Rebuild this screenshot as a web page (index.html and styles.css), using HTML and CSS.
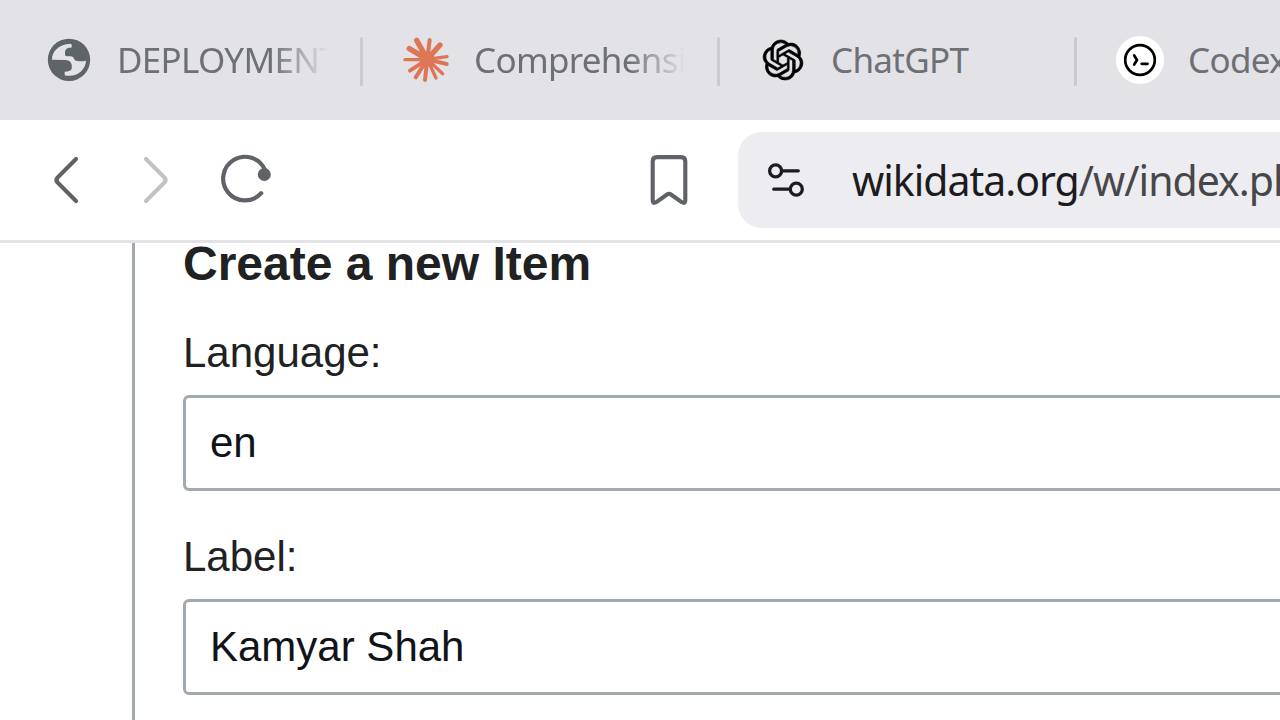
FILE: index.html
```html
<!DOCTYPE html>
<html lang="en">
<head>
<meta charset="utf-8">
<title>Create a new Item</title>
<link rel="stylesheet" href="styles.css">
</head>
<body>
<div class="tabs">
  <div class="tab">
    <svg class="favicon" viewBox="0 0 144 144"><circle cx="72" cy="71.500" r="63.500" fill="#5f6469"/><path d="M21 71C20 50 36 25 78 23Q83 28 79 35H70Q61 38 60 47V56Q61 61 68 61H78Q86 62 87 68Q89 75 97 75Q109 77 123 74C122 102 94 126 59 118V107Q78 106 80 98C82 84 77 72 61 72Z" fill="#e3e2e7"/></svg>
    <span class="tab-title fade">DEPLOYMENT</span>
  </div>
  <div class="tab">
    <svg class="favicon" viewBox="0 0 144 144"><g stroke="#de7655" stroke-linecap="round" fill="none"><path stroke-width="16" d="M76 70L44 13M76 70L114 27M76 70L22 38"/><path stroke-width="12" d="M76 70L83 12M76 70L24 104M76 70L41 124M76 70L69 132M76 70L134 84"/><path stroke-width="10" d="M76 70L9 71M76 70L135 62M76 70L122 113M76 70L102 126"/></g><circle cx="76" cy="70" r="22" fill="#de7655"/></svg>
    <span class="tab-title fade">Comprehensive</span>
  </div>
  <div class="tab">
    <svg class="favicon" viewBox="0 0 28.800 28.800"><path transform="translate(2.400 2.400)" fill="#000" stroke="#000" stroke-width=".4" d="M22.2819 9.8211a5.9847 5.9847 0 0 0-.5157-4.9108 6.0462 6.0462 0 0 0-6.5098-2.9A6.0651 6.0651 0 0 0 4.9807 4.1818a5.9847 5.9847 0 0 0-3.9977 2.9 6.0462 6.0462 0 0 0 .7427 7.0966 5.98 5.98 0 0 0 .511 4.9107 6.051 6.051 0 0 0 6.5146 2.9001A5.9847 5.9847 0 0 0 13.2599 24a6.0557 6.0557 0 0 0 5.7718-4.2058 5.9894 5.9894 0 0 0 3.9977-2.9001 6.0557 6.0557 0 0 0-.7475-7.0729zm-9.022 12.6081a4.4755 4.4755 0 0 1-2.8764-1.0408l.1419-.0804 4.7783-2.7582a.7948.7948 0 0 0 .3927-.6813v-6.7369l2.02 1.1686a.071.071 0 0 1 .038.052v5.5826a4.504 4.504 0 0 1-4.4945 4.4944zm-9.6607-4.1254a4.4708 4.4708 0 0 1-.5346-3.0137l.142.0852 4.783 2.7582a.7712.7712 0 0 0 .7806 0l5.8428-3.3685v2.3324a.0804.0804 0 0 1-.0332.0615L9.74 19.9502a4.4992 4.4992 0 0 1-6.1408-1.6464zM2.3408 7.8956a4.485 4.485 0 0 1 2.3655-1.9728V11.6a.7664.7664 0 0 0 .3879.6765l5.8144 3.3543-2.0201 1.1685a.0757.0757 0 0 1-.071 0l-4.8303-2.7865A4.504 4.504 0 0 1 2.3408 7.872zm16.5963 3.8558L13.1038 8.364 15.1192 7.2a.0757.0757 0 0 1 .071 0l4.8303 2.7913a4.4944 4.4944 0 0 1-.6765 8.1042v-5.6772a.79.79 0 0 0-.407-.667zm2.0107-3.0231l-.142-.0852-4.7735-2.7818a.7759.7759 0 0 0-.7854 0L9.409 9.2297V6.8974a.0662.0662 0 0 1 .0284-.0615l4.8303-2.7866a4.4992 4.4992 0 0 1 6.6802 4.66zM8.3065 12.863l-2.02-1.1638a.0804.0804 0 0 1-.038-.0567V6.0742a4.4992 4.4992 0 0 1 7.3757-3.4537l-.142.0805L8.704 5.459a.7948.7948 0 0 0-.3927.6813zm1.0976-2.3654l2.602-1.4998 2.6069 1.4998v2.9994l-2.5974 1.4997-2.6067-1.4997Z"/></svg>
    <span class="tab-title">ChatGPT</span>
  </div>
  <div class="tab">
    <svg class="favicon" viewBox="0 0 48 48"><circle cx="24" cy="24" r="24" fill="#fff"/><g fill="none" stroke="#000" stroke-width="2.700" stroke-linecap="round" stroke-linejoin="round"><circle cx="24" cy="24" r="14.800"/><path d="M18.200 19.500L21 24L18.200 28.500M25.700 27.800H31.500"/></g></svg>
    <span class="tab-title">Codex</span>
  </div>
</div>
<div class="toolbar">
  <div class="nav">
    <svg class="nav-icon" viewBox="0 0 60 60"><path d="M46 9L27.500 27.600Q25.400 30 27.500 32.400L46 51" fill="none" stroke="#5f6368" stroke-width="4.200" stroke-linecap="round"/></svg>
    <svg class="nav-icon" viewBox="0 0 60 60"><path d="M26 9L44.500 27.600Q46.600 30 44.500 32.400L26 51" fill="none" stroke="#c1c2c4" stroke-width="4.200" stroke-linecap="round"/></svg>
    <svg class="nav-icon" viewBox="0 0 60 60"><path d="M55 20A21.800 21.800 0 1 0 51.200 43.200" fill="none" stroke="#5f6368" stroke-width="4.200" stroke-linecap="round"/><circle cx="54.300" cy="24.500" r="6.500" fill="#5f6368"/></svg>
  </div>
  <svg class="bookmark" viewBox="0 0 48 60"><path d="M9 7.100H33Q37.300 7.100 37.300 11.400V50.500Q37.300 54 34 52.300L23 44.500Q21 43.200 19 44.500L8 52.300Q4.700 54 4.700 50.500V11.400Q4.700 7.100 9 7.100Z" fill="none" stroke="#5f6368" stroke-width="4.100" stroke-linejoin="round"/></svg>
  <div class="address">
    <svg class="site-icon" viewBox="0 0 48 48"><g fill="none" stroke="#1b1b20" stroke-width="3.300" stroke-linecap="round"><circle cx="13.600" cy="14.800" r="6"/><path d="M20 14.800H36.300M11.800 33.200H27.500"/><circle cx="34.300" cy="33.200" r="6"/></g></svg>
    <span class="url"><span class="host">wikidata.org</span>/w/index.php</span>
  </div>
</div>
<main class="page">
  <section class="form">
    <h1>Create a new Item</h1>
    <label>Language:</label>
    <div class="field">en</div>
    <label>Label:</label>
    <div class="field">Kamyar Shah</div>
  </section>
</main>
</body>
</html>
```
FILE: styles.css
```css
* { box-sizing: border-box; }
body {
  margin: 0;
  width: 1280px;
  height: 720px;
  overflow: hidden;
  background: #fff;
  display: flex;
  flex-direction: column;
}
svg { display: block; flex: none; overflow: visible; }
.tabs {
  height: 120px;
  flex: none;
  display: flex;
  background: #e3e2e7;
  padding-left: 6px;
}
.tab {
  width: 357px;
  flex: none;
  display: flex;
  align-items: center;
  padding-left: 39px;
  position: relative;
}
.tab:last-child { width: 217px; }
.tab:not(:last-child)::after {
  content: "";
  position: absolute;
  right: 0;
  top: 37px;
  width: 3px;
  height: 49px;
  border-radius: 2px;
  background: #cbcacf;
}
.favicon { width: 48px; height: 48px; }
.tab-title {
  margin-left: 24px;
  width: 215px;
  flex: none;
  overflow: hidden;
  white-space: nowrap;
  font: 400 35px/48px "Noto Sans", sans-serif;
  color: #6d7175;
  letter-spacing: -0.700px;
}
.fade {
  -webkit-mask-image: linear-gradient(90deg, #000 155px, transparent 211px);
  mask-image: linear-gradient(90deg, #000 155px, transparent 211px);
}
.toolbar {
  height: 123px;
  flex: none;
  display: flex;
  border-bottom: 3px solid #e3e2e7;
  padding: 12px 0 0 30px;
}
.nav { display: flex; gap: 30px; padding-top: 18px; width: 618px; flex: none; }
.nav-icon { width: 60px; height: 60px; }
.bookmark { width: 48px; height: 60px; margin-top: 18px; }
.address {
  margin-left: 42px;
  width: 600px;
  height: 96px;
  flex: none;
  display: flex;
  align-items: center;
  padding-left: 24px;
  background: #edecf1;
  border-radius: 24px;
}
.site-icon { width: 48px; height: 48px; }
.url {
  margin-left: 42px;
  font: 400 41px/60px "Noto Sans", sans-serif;
  letter-spacing: -1px;
  color: #47474a;
  white-space: nowrap;
}
.host { color: #1b1b20; }
.page { padding-left: 132px; flex: 1; display: flex; }
.form {
  flex: 1;
  border-left: 3px solid #a2a9b1;
  padding-left: 48px;
  font-family: "Liberation Sans", Arial, sans-serif;
  color: #202122;
}
h1 { margin: -6px 0 30px; font-size: 48px; line-height: 54px; }
label { display: block; font-size: 42px; line-height: 64px; margin-bottom: 10px; }
.field {
  height: 96px;
  width: 1120px;
  border: 3px solid #a2a9b1;
  border-radius: 6px;
  padding-left: 24px;
  font-size: 42px;
  line-height: 90px;
  color: #101418;
  margin-bottom: 34px;
}
```
